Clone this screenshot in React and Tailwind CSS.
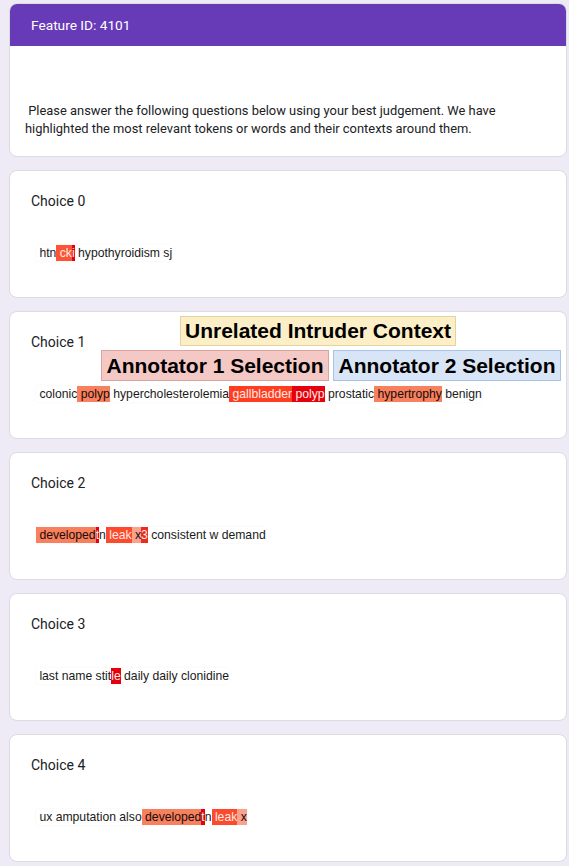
import React from "react";

const SALMON = "bg-[#f7805f] text-[#1a0a05]";
const ORANGE = "bg-[#fb4a2c] text-[#ffe9e4]";
const BRIGHT = "bg-[#ff3d21] text-[#ffe9e4]";
const RED = "bg-[#e6000d] text-[#ffe9e4]";
const LIGHT = "bg-[#f9a28d] text-[#1a0a05]";
const MID = "bg-[#fc5436] text-[#ffe9e4]";
const RED2 = "bg-[#ea2b1f] text-[#ffe9e4]";

const choices = [
  [
    [" htn", ""],
    [" ck", MID],
    ["i", RED],
    [" hypothyroidism sj", ""],
  ],
  [
    [" colonic", ""],
    [" polyp", SALMON],
    [" hypercholesterolemia", ""],
    [" gallbladder", BRIGHT],
    [" polyp", RED],
    [" prostatic", ""],
    [" hypertrophy", SALMON],
    [" benign", ""],
  ],
  [
    [" developed", SALMON],
    ["t", RED],
    ["n", ""],
    [" leak", ORANGE],
    [" x", LIGHT],
    ["3", RED2],
    [" consistent w demand", ""],
  ],
  [
    [" last name stit", ""],
    ["le", RED],
    [" daily daily clonidine", ""],
  ],
  [
    [" ux amputation also", ""],
    [" developed", SALMON],
    ["t", RED],
    ["n", ""],
    [" leak", ORANGE],
    [" x", LIGHT],
  ],
];

function Tokens({ tokens }) {
  return (
    <div className="ml-[5px] inline-flex whitespace-pre bg-white text-[12.2px] leading-[16px] text-[#1a1a1a] shadow-[0_0_2px_rgba(0,0,0,0.06)] [font-family:'Liberation_Sans',Arial,sans-serif]">
      {tokens.map(([t, c], i) => (
        <span key={i} className={c}>
          {t}
        </span>
      ))}
    </div>
  );
}

function ChoiceCard({ idx, tokens, children }) {
  return (
    <div className="relative h-[128px] shrink-0 rounded-lg border border-[#dadce0] bg-white px-[21px] pt-[20px]">
      <div className="text-[14px] leading-[20px] text-[#202124] [font-family:Roboto,sans-serif]">
        Choice {idx}
      </div>
      <div className="mt-[34px] flex">
        <Tokens tokens={tokens} />
      </div>
      {children}
    </div>
  );
}

export default function App() {
  return (
    <div className="min-h-[866px] bg-[#eeebf6] pl-[9px] pr-[2px] pt-[3px] [font-family:Roboto,sans-serif]">
      <div className="flex flex-col gap-[13px]">
        <div className="overflow-hidden rounded-lg border border-[#dadce0] bg-white">
          <div className="flex h-[42px] items-center bg-[#673ab7] pl-[21px] text-[13.7px] text-white">
            Feature ID: 4101
          </div>
          <div className="whitespace-pre-line pb-[18px] pl-[15px] pt-[56px] text-[12.9px] leading-[18px] text-[#202124]">
            {"\u00a0Please answer the following questions below using your best judgement. We have\nhighlighted the most relevant tokens or words and their contexts around them."}
          </div>
        </div>
        {choices.map((t, i) => (
          <ChoiceCard key={i} idx={i} tokens={t}>
            {i === 1 && (
              <>
                <div className="absolute left-[170px] top-[4px] flex h-[30px] w-[276px] items-center justify-center border border-[#e3d39d] bg-[#fcefc8] text-[21px] font-bold text-black [font-family:'Liberation_Sans',Arial,sans-serif]">
                  Unrelated Intruder Context
                </div>
                <div className="absolute left-[91px] top-[38px] flex h-[31px] w-[228px] items-center justify-center border border-[#d9a3a0] bg-[#f4c8c5] text-[21px] font-bold text-black [font-family:'Liberation_Sans',Arial,sans-serif]">
                  Annotator 1 Selection
                </div>
                <div className="absolute left-[323px] top-[38px] flex h-[31px] w-[228px] items-center justify-center border border-[#a9c3e3] bg-[#d8e5f6] text-[21px] font-bold text-black [font-family:'Liberation_Sans',Arial,sans-serif]">
                  Annotator 2 Selection
                </div>
              </>
            )}
          </ChoiceCard>
        ))}
      </div>
    </div>
  );
}
